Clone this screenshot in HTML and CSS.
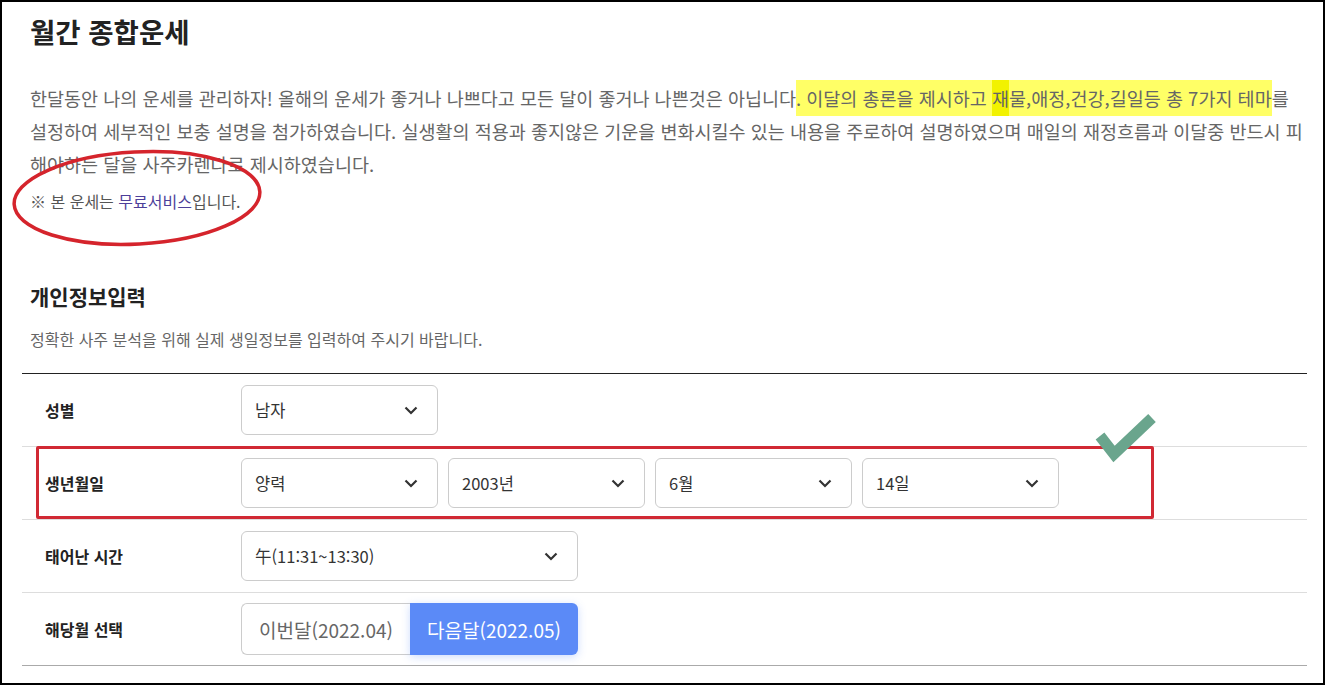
FILE: index.html
```html
<!DOCTYPE html>
<html lang="ko">
<head>
<meta charset="utf-8">
<title>월간 종합운세</title>
<link rel="stylesheet" href="styles.css">
</head>
<body>
<div class="frame">
  <h1 class="title">월간 종합운세</h1>
  <div class="intro">
    <p class="desc">한달동안 나의 운세를 관리하자! 올해의 운세가 좋거나 나쁘다고 모든 달이 좋거나 나쁜것은 아닙니다<span class="hl hl-a">. 이달의 총론을 제시하고 </span><span class="hl hl-x">재</span><span class="hl hl-b">물,애정,건강,길일등 총 7가지 테마</span>를<br>설정하여 세부적인 보충 설명을 첨가하였습니다. 실생활의 적용과 좋지않은 기운을 변화시킬수 있는 내용을 주로하여 설명하였으며 매일의 재정흐름과 이달중 반드시 피<br>해야하는 달을 사주카렌다로 제시하였습니다.</p>
    <p class="note">※ 본 운세는 <span class="free">무료서비스</span>입니다.</p>
    <svg class="circle-mark" width="270" height="110" viewBox="0 0 270 110">
      <ellipse cx="134" cy="54" rx="123" ry="46" fill="none" stroke="#d5242c" stroke-width="3.5" transform="rotate(-3 134 54)"/>
    </svg>
  </div>

  <h2 class="sec-title">개인정보입력</h2>
  <p class="sec-desc">정확한 사주 분석을 위해 실제 생일정보를 입력하여 주시기 바랍니다.</p>

  <div class="form">
    <div class="row">
      <div class="label">성별</div>
      <div class="fields">
        <div class="select"><span>남자</span><svg class="chev" width="14" height="9" viewBox="0 0 14 9"><polyline points="1.5,1.5 7,7 12.5,1.5" fill="none" stroke="#333" stroke-width="2.2"/></svg></div>
      </div>
    </div>
    <div class="row row-mark">
      <div class="label">생년월일</div>
      <div class="fields">
        <div class="select"><span>양력</span><svg class="chev" width="14" height="9" viewBox="0 0 14 9"><polyline points="1.5,1.5 7,7 12.5,1.5" fill="none" stroke="#333" stroke-width="2.2"/></svg></div>
        <div class="select"><span>2003년</span><svg class="chev" width="14" height="9" viewBox="0 0 14 9"><polyline points="1.5,1.5 7,7 12.5,1.5" fill="none" stroke="#333" stroke-width="2.2"/></svg></div>
        <div class="select"><span>6월</span><svg class="chev" width="14" height="9" viewBox="0 0 14 9"><polyline points="1.5,1.5 7,7 12.5,1.5" fill="none" stroke="#333" stroke-width="2.2"/></svg></div>
        <div class="select"><span>14일</span><svg class="chev" width="14" height="9" viewBox="0 0 14 9"><polyline points="1.5,1.5 7,7 12.5,1.5" fill="none" stroke="#333" stroke-width="2.2"/></svg></div>
      </div>
      <div class="red-box"></div>
      <svg class="check" width="64" height="56" viewBox="0 0 64 56">
        <polyline points="6,26 20,44 58,8" fill="none" stroke="#6aa58d" stroke-width="11" stroke-linejoin="miter"/>
      </svg>
    </div>
    <div class="row">
      <div class="label">태어난 시간</div>
      <div class="fields">
        <div class="select select-wide"><span>午(11:31~13:30)</span><svg class="chev" width="14" height="9" viewBox="0 0 14 9"><polyline points="1.5,1.5 7,7 12.5,1.5" fill="none" stroke="#333" stroke-width="2.2"/></svg></div>
      </div>
    </div>
    <div class="row row-last">
      <div class="label">해당월 선택</div>
      <div class="fields">
        <div class="toggle">
          <div class="opt">이번달(2022.04)</div>
          <div class="opt opt-on">다음달(2022.05)</div>
        </div>
      </div>
    </div>
  </div>
</div>
</body>
</html>
```

FILE: styles.css
```css
* { box-sizing: border-box; }
html, body { margin: 0; padding: 0; background: #fff; }
body {
  font-family: "Noto Sans CJK KR", "Noto Sans", sans-serif;
  color: #333;
}
.frame {
  width: 1325px;
  height: 685px;
  border: 2px solid #000;
  padding: 0 16px 0 20px;
  overflow: hidden;
}
.title {
  margin: 10px 0 0 8px;
  font-size: 27.5px;
  line-height: 38px;
  font-weight: 700;
  color: #222;
}
.intro {
  position: relative;
  padding-left: 8px;
}
.desc {
  margin: 32px 0 0;
  font-size: 18.5px;
  line-height: 33px;
  color: #666;
  white-space: nowrap;
}
.hl { padding: 5px 0; }
.hl-a { background: #ffff66; }
.hl-x { background: #f2f200; }
.hl-b { background: #ffff66; }
.note {
  margin: 4px 0 0;
  font-size: 16px;
  line-height: 33px;
  color: #555;
}
.free { color: #4d3f9a; }
.circle-mark {
  position: absolute;
  left: -19px;
  top: 62px;
}
.sec-title {
  margin: 63px 0 0 8px;
  font-size: 21px;
  line-height: 30px;
  font-weight: 700;
  color: #222;
}
.sec-desc {
  margin: 15px 0 0 8px;
  font-size: 16px;
  line-height: 26px;
  color: #666;
}
.form {
  margin-top: 21px;
  border-top: 1px solid #222;
}
.row {
  position: relative;
  display: flex;
  align-items: center;
  height: 73px;
  border-bottom: 1px solid #ddd;
}
.row-last { border-bottom-color: #aaa; }
.label {
  width: 219px;
  padding-left: 23px;
  font-size: 16px;
  font-weight: 700;
  color: #222;
}
.fields {
  display: flex;
  gap: 10px;
}
.select {
  display: flex;
  align-items: center;
  justify-content: space-between;
  width: 197px;
  height: 50px;
  padding: 0 19px 0 13px;
  border: 1px solid #ccc;
  border-radius: 6px;
  font-size: 16.5px;
  color: #333;
  background: #fff;
}
.select-wide { width: 337px; }
.chev { display: block; }
.toggle {
  display: flex;
  width: 337px;
  height: 52px;
}
.opt {
  flex: 1;
  display: flex;
  align-items: center;
  justify-content: center;
  font-size: 19px;
  color: #666;
  border: 1px solid #ccc;
  border-right: none;
  border-radius: 6px 0 0 6px;
  background: #fff;
}
.opt-on {
  color: #fff;
  background: #5b8af7;
  border: none;
  border-radius: 0 6px 6px 0;
  box-shadow: 0 2px 8px rgba(91, 138, 247, 0.3);
}
.red-box {
  position: absolute;
  left: 14px;
  top: -1px;
  width: 1118px;
  height: 73px;
  border: 3px solid #d12934;
  border-radius: 2px;
  pointer-events: none;
}
.check {
  position: absolute;
  left: 1072px;
  top: -37px;
}
```
